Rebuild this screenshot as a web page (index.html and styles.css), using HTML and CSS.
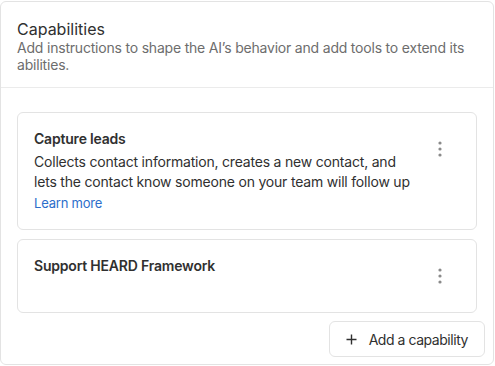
FILE: index.html
```html
<!DOCTYPE html>
<html>
<head>
<meta charset="utf-8">
<link rel="stylesheet" href="styles.css">
</head>
<body>
<div class="panel">
  <div class="panel-header">
    <div class="panel-title">Capabilities</div>
    <div class="panel-desc">Add instructions to shape the AI’s behavior and add tools to extend its abilities.</div>
  </div>
  <div class="panel-body">
    <div class="cap-card">
      <div class="cap-text">
        <div class="cap-title">Capture leads</div>
        <div class="cap-desc">Collects contact information, creates a new contact, and lets the contact know someone on your team will follow up</div>
        <a class="cap-link" href="#">Learn more</a>
      </div>
      <button class="kebab" aria-label="More actions">
        <svg width="4" height="16" viewBox="0 0 4 16"><circle cx="2" cy="2" r="1.6"/><circle cx="2" cy="8" r="1.6"/><circle cx="2" cy="14" r="1.6"/></svg>
      </button>
    </div>
    <div class="cap-card">
      <div class="cap-text">
        <div class="cap-title">Support HEARD Framework</div>
      </div>
      <button class="kebab" aria-label="More actions">
        <svg width="4" height="16" viewBox="0 0 4 16"><circle cx="2" cy="2" r="1.6"/><circle cx="2" cy="8" r="1.6"/><circle cx="2" cy="14" r="1.6"/></svg>
      </button>
    </div>
    <div class="actions">
      <button class="add-btn">
        <svg width="11" height="11" viewBox="0 0 11 11"><path d="M5.5 0.5v10M0.5 5.5h10" stroke="#303030" stroke-width="1.4" fill="none"/></svg>
        <span>Add a capability</span>
      </button>
    </div>
  </div>
</div>
</body>
</html>
```
FILE: styles.css
```css
* { box-sizing: border-box; }
html, body { margin: 0; padding: 0; background: #fff; }
body {
  font-family: Inter, "Noto Sans", sans-serif;
  color: #303030;
  font-size: 14px;
  line-height: 20px;
}
.panel {
  margin-top: 1px;
  width: 494px;
  height: 364px;
  border: 1px solid #e3e3e3;
  border-radius: 6px;
  background: #fff;
  display: flex;
  flex-direction: column;
}
.panel-header {
  padding: 17px 16px 14px;
  border-bottom: 1px solid #ebebeb;
}
.panel-title {
  font-size: 16px;
  line-height: 20px;
  color: #303030;
}
.panel-desc {
  font-size: 14px;
  line-height: 17px;
  color: #6d6d6d;
  letter-spacing: -0.2px;
}
.panel-body {
  padding: 24px 16px 0;
  display: flex;
  flex-direction: column;
  gap: 9px;
}
.cap-card {
  border: 1px solid #e3e3e3;
  border-radius: 6px;
  padding: 16px;
  display: flex;
  align-items: flex-start;
  gap: 8px;
}
.cap-text { flex: 1; min-width: 0; }
.cap-title {
  font-weight: 600;
  letter-spacing: -0.2px;
}
.cap-desc {
  margin-top: 3px;
  letter-spacing: -0.2px;
}
.cap-link {
  display: block;
  margin-top: 2px;
  line-height: 19px;
  font-size: 13px;
  color: #2c6ecb;
  letter-spacing: -0.2px;
  text-decoration: none;
}
.kebab {
  width: 40px;
  height: 40px;
  border: 0;
  background: transparent;
  padding: 0;
  display: flex;
  align-items: center;
  justify-content: center;
  flex: none;
}
.kebab svg { fill: #8a8a8a; }
.actions {
  display: flex;
  justify-content: flex-end;
  margin-top: -1px;
  margin-right: -8px;
}
.add-btn {
  height: 36px;
  padding: 0 16px;
  border: 1px solid #e3e3e3;
  border-radius: 6px;
  background: #fff;
  display: flex;
  align-items: center;
  gap: 12px;
  font-family: inherit;
  font-size: 14px;
  color: #303030;
  letter-spacing: -0.45px;
}
```
